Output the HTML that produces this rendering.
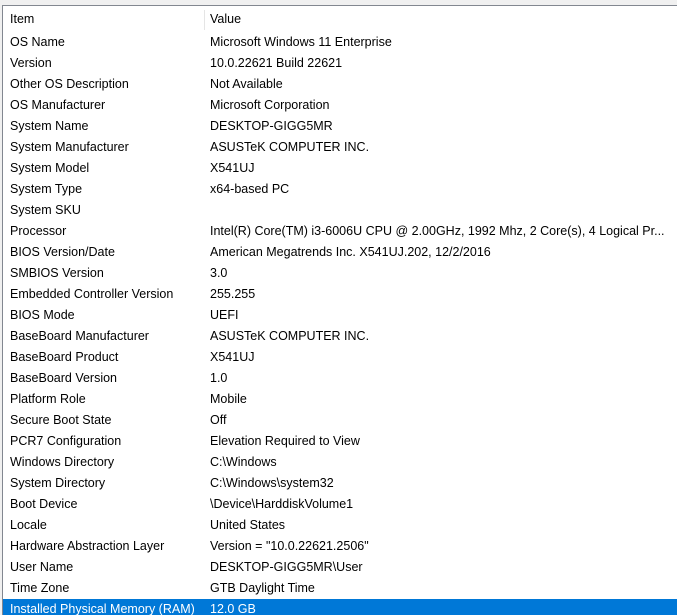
<!DOCTYPE html><html style="overflow:hidden;height:615px"><head><style>
body{margin:0;width:677px;height:615px;overflow:hidden;background:#f0f0f0;font-family:"Liberation Sans",sans-serif;font-size:12.5px;color:#000;position:relative}
.p{position:absolute;left:2px;top:5px;width:675px;height:610px;overflow:hidden;background:#fff;border-left:1px solid #828790;border-top:1px solid #828790}
.r{position:absolute;left:0;width:680px;height:21px;line-height:21px}
.r span{position:absolute;left:7px;white-space:nowrap}
.r b{font-weight:normal;position:absolute;left:207px;white-space:nowrap}
.sep{position:absolute;left:201px;top:4px;width:1px;height:20px;background:#e5e5e5}
.sel{background:#0078d7;color:#fff}
</style></head><body><div class="p">
<div class="r" style="top:3px"><span>Item</span><b>Value</b></div><div class="sep"></div>
<div class="r" style="top:26px"><span>OS Name</span><b>Microsoft Windows 11 Enterprise</b></div>
<div class="r" style="top:47px"><span>Version</span><b>10.0.22621 Build 22621</b></div>
<div class="r" style="top:68px"><span>Other OS Description</span><b>Not Available</b></div>
<div class="r" style="top:89px"><span>OS Manufacturer</span><b>Microsoft Corporation</b></div>
<div class="r" style="top:110px"><span>System Name</span><b>DESKTOP-GIGG5MR</b></div>
<div class="r" style="top:131px"><span>System Manufacturer</span><b>ASUSTeK COMPUTER INC.</b></div>
<div class="r" style="top:152px"><span>System Model</span><b>X541UJ</b></div>
<div class="r" style="top:173px"><span>System Type</span><b>x64-based PC</b></div>
<div class="r" style="top:194px"><span>System SKU</span><b></b></div>
<div class="r" style="top:215px"><span>Processor</span><b>Intel(R) Core(TM) i3-6006U CPU @ 2.00GHz, 1992 Mhz, 2 Core(s), 4 Logical Pr...</b></div>
<div class="r" style="top:236px"><span>BIOS Version/Date</span><b>American Megatrends Inc. X541UJ.202, 12/2/2016</b></div>
<div class="r" style="top:257px"><span>SMBIOS Version</span><b>3.0</b></div>
<div class="r" style="top:278px"><span>Embedded Controller Version</span><b>255.255</b></div>
<div class="r" style="top:299px"><span>BIOS Mode</span><b>UEFI</b></div>
<div class="r" style="top:320px"><span>BaseBoard Manufacturer</span><b>ASUSTeK COMPUTER INC.</b></div>
<div class="r" style="top:341px"><span>BaseBoard Product</span><b>X541UJ</b></div>
<div class="r" style="top:362px"><span>BaseBoard Version</span><b>1.0</b></div>
<div class="r" style="top:383px"><span>Platform Role</span><b>Mobile</b></div>
<div class="r" style="top:404px"><span>Secure Boot State</span><b>Off</b></div>
<div class="r" style="top:425px"><span>PCR7 Configuration</span><b>Elevation Required to View</b></div>
<div class="r" style="top:446px"><span>Windows Directory</span><b>C:\Windows</b></div>
<div class="r" style="top:467px"><span>System Directory</span><b>C:\Windows\system32</b></div>
<div class="r" style="top:488px"><span>Boot Device</span><b>\Device\HarddiskVolume1</b></div>
<div class="r" style="top:509px"><span>Locale</span><b>United States</b></div>
<div class="r" style="top:530px"><span>Hardware Abstraction Layer</span><b>Version = "10.0.22621.2506"</b></div>
<div class="r" style="top:551px"><span>User Name</span><b>DESKTOP-GIGG5MR\User</b></div>
<div class="r" style="top:572px"><span>Time Zone</span><b>GTB Daylight Time</b></div>
<div class="r sel" style="top:593px;left:-3px;width:685px"><span style="left:10px">Installed Physical Memory (RAM)</span><b style="left:210px">12.0 GB</b></div>
</div></body></html>
